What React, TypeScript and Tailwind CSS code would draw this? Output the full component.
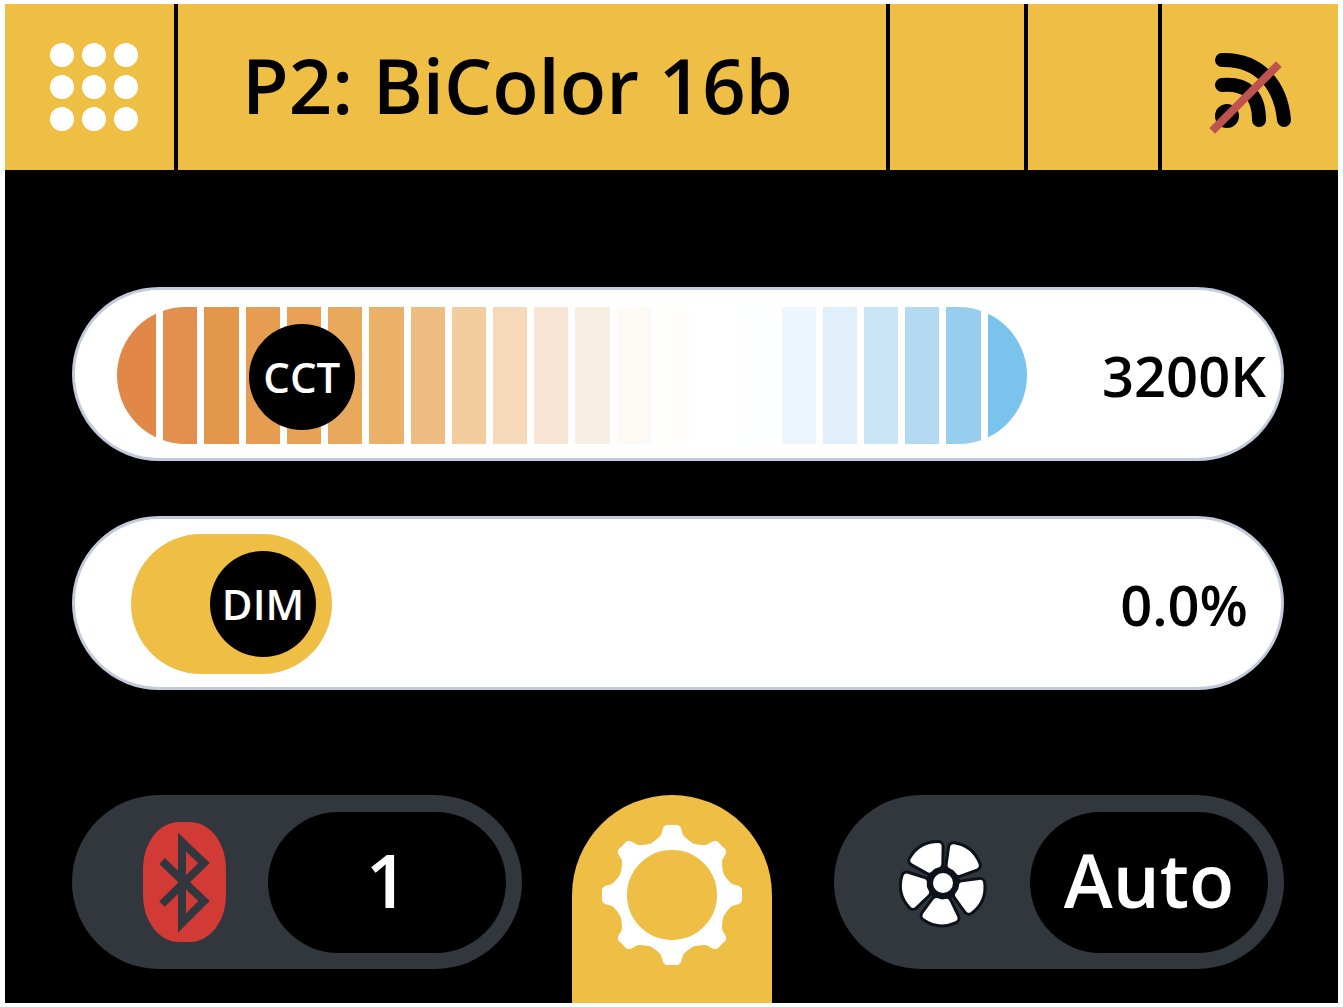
import { useState } from "react";
import type { ReactNode } from "react";

const CCT_MIN = 2700;
const CCT_MAX = 5750;

const stripes = [
  "bg-[#e18849]", "bg-[#e38f4e]", "bg-[#e3974b]", "bg-[#e69c51]", "bg-[#e8a156]", "bg-[#e9a95c]",
  "bg-[#ebb168]", "bg-[#efbd81]", "bg-[#f3cd9d]", "bg-[#f5d9b9]", "bg-[#f8e5d4]", "bg-[#f9eee4]",
  "bg-[#fdf9f4]", "bg-[#fffefc]", "bg-white", "bg-[#fdfeff]", "bg-[#edf6fd]", "bg-[#e1effa]",
  "bg-[#c9e4f6]", "bg-[#b4daf2]", "bg-[#97cdee]", "bg-[#79c3ec]",
];

function NoSignalIcon() {
  return (
    <svg viewBox="0 -3 120 120" className="size-[120px]" fill="none" aria-hidden="true">
      <circle cx="37" cy="86" r="12" fill="#000" />
      <path d="M32 55Q69 52 69 90" stroke="#000" strokeWidth="14" strokeLinecap="round" />
      <path d="M32 30C70 29 91 56 94 90" stroke="#000" strokeWidth="14" strokeLinecap="round" />
      <path d="M25 98L86 37" stroke="#be524e" strokeWidth="8" strokeLinecap="square" />
    </svg>
  );
}

function BluetoothIcon() {
  return (
    <svg viewBox="14 11 83 120" className="h-[120px] w-[83px]" fill="none" aria-hidden="true">
      <rect x="14" y="11" width="83" height="120" rx="36" ry="46" fill="#d23a36" />
      <path d="M33 50L75 90L53 112V31L75 52L33 93" stroke="#32363d" strokeWidth="8" strokeMiterlimit="10" />
    </svg>
  );
}

function FanIcon() {
  const blade = "M-14 -34Q0 -42 14 -34L5 -19Q0 -21 -5 -19Z";
  const angles = [-30, 39, 113, 185, 257];
  return (
    <svg viewBox="-47 -51 100 100" className="size-[100px]" aria-hidden="true">
      {angles.map((a) => (
        <path key={a} d={blade} transform={`rotate(${a})`} fill="#0d121a" stroke="#0d121a" strokeWidth="13" strokeLinejoin="round" />
      ))}
      <circle r="17" fill="#0d121a" />
      {angles.map((a) => (
        <path key={a} d={blade} transform={`rotate(${a})`} fill="#fff" stroke="#fff" strokeWidth="7" strokeLinejoin="round" />
      ))}
      <circle r="12" fill="#fff" stroke="#0d121a" strokeWidth="4" />
    </svg>
  );
}

function GearIcon() {
  return (
    <svg viewBox="-70 -70 140 140" className="size-[140px]" aria-hidden="true">
      <circle r="50" fill="none" stroke="#fff" strokeWidth="10" />
      {[0, 45, 90, 135, 180, 225, 270, 315].map((a) => (
        <path
          key={a}
          transform={`rotate(${a})`}
          fill="#fff"
          d="M-6 -70H6Q8 -69 9 -67L11 -60Q14 -56 22 -51L18 -47H-18L-22 -51Q-14 -56 -11 -60L-9 -67Q-8 -69 -6 -70Z"
        />
      ))}
    </svg>
  );
}

function Knob({ children }: { children: ReactNode }) {
  return (
    <span className="flex size-[106px] items-center justify-center rounded-full bg-black text-[42px] leading-none text-white">
      {children}
    </span>
  );
}

function SliderRow({ id, value, children }: { id: string; value: string; children: ReactNode }) {
  return (
    <div className="flex h-[174px] items-center rounded-full border-[3px] border-[#c3cadb] bg-white pt-0.5">
      {children}
      <output htmlFor={id} className="w-[194px] shrink-0 text-center text-[56px] leading-none text-black">
        {value}
      </output>
    </div>
  );
}

function StatusPill({ label, icon, value }: { label: string; icon: ReactNode; value: string }) {
  return (
    <button
      type="button"
      aria-label={`${label}: ${value}`}
      className="flex h-[174px] min-w-0 flex-1 items-center rounded-full bg-[#32363d] pr-4 pl-7"
    >
      <span className="flex flex-1 justify-center">{icon}</span>
      <span className="flex h-[141px] w-[238px] items-center justify-center rounded-full bg-black pb-1 text-[74px] leading-none text-white">
        {value}
      </span>
    </button>
  );
}

export default function App() {
  const [cct, setCct] = useState(3200);
  const [dim, setDim] = useState(0);
  const cctPos = (cct - CCT_MIN) / (CCT_MAX - CCT_MIN);

  return (
    <div className="flex min-h-screen flex-col bg-white px-[5px] py-1 font-['Open_Sans',sans-serif] font-semibold">
      <header className="flex h-[166px] items-stretch bg-[#eebe45]">
        <button type="button" aria-label="Menu" className="flex w-[173px] items-center justify-center border-r-4 border-black pl-2">
          <span className="grid grid-cols-3 gap-2">
            {Array.from({ length: 9 }, (_, i) => (
              <span key={i} className="size-6 rounded-full bg-white" />
            ))}
          </span>
        </button>
        <h1 className="flex flex-1 items-center border-r-4 border-black pb-1 pl-16 text-[76px] leading-none whitespace-nowrap text-black">
          P2: BiColor 16b
        </h1>
        <div className="w-[138px] border-r-4 border-black" />
        <div className="w-[134px] border-r-4 border-black" />
        <button type="button" aria-label="No signal" className="flex w-[176px] items-center justify-center">
          <NoSignalIcon />
        </button>
      </header>

      <main className="flex flex-1 flex-col bg-black pt-[117px] pr-[54px] pl-[67px]">
        <div className="flex flex-col gap-[55px]">
          <SliderRow id="cct" value={`${cct}K`}>
            <div className="relative ml-[42px] h-[137px] flex-1">
              <div className="flex h-full gap-[7px] overflow-hidden rounded-full">
                {stripes.map((color, i) => (
                  <span
                    key={i}
                    className={`${color} ${i === 0 || i === stripes.length - 1 ? "flex-[39]" : "flex-[34]"}`}
                  />
                ))}
              </div>
              <label
                htmlFor="cct"
                className="absolute top-[17px]"
                style={{ left: `calc((100% - 106px) * ${cctPos})` }}
              >
                <Knob>CCT</Knob>
              </label>
              <input
                id="cct"
                type="range"
                min={CCT_MIN}
                max={CCT_MAX}
                step={50}
                value={cct}
                onChange={(e) => setCct(Number(e.target.value))}
                className="absolute inset-0 h-full w-full cursor-pointer opacity-0"
              />
            </div>
            <div className="w-[60px] shrink-0" />
          </SliderRow>

          <SliderRow id="dim" value={`${dim.toFixed(1)}%`}>
            <div className="relative ml-14 h-[140px] flex-1">
              <label
                htmlFor="dim"
                className="flex h-full items-center justify-end rounded-full bg-[#eebe45] pr-4"
                style={{ width: `calc(201px + (100% - 201px) * ${dim / 100})` }}
              >
                <Knob>DIM</Knob>
              </label>
              <input
                id="dim"
                type="range"
                min={0}
                max={100}
                step={0.1}
                value={dim}
                onChange={(e) => setDim(Number(e.target.value))}
                className="absolute inset-0 h-full w-full cursor-pointer opacity-0"
              />
            </div>
          </SliderRow>
        </div>

        <footer className="mt-auto flex items-start">
          <StatusPill label="Bluetooth" icon={<BluetoothIcon />} value="1" />
          <button
            type="button"
            aria-label="Settings"
            className="mr-[62px] ml-[50px] flex h-[208px] w-[200px] justify-center rounded-t-full bg-[#eebe45] pt-[30px]"
          >
            <GearIcon />
          </button>
          <StatusPill label="Fan" icon={<FanIcon />} value="Auto" />
        </footer>
      </main>
    </div>
  );
}
